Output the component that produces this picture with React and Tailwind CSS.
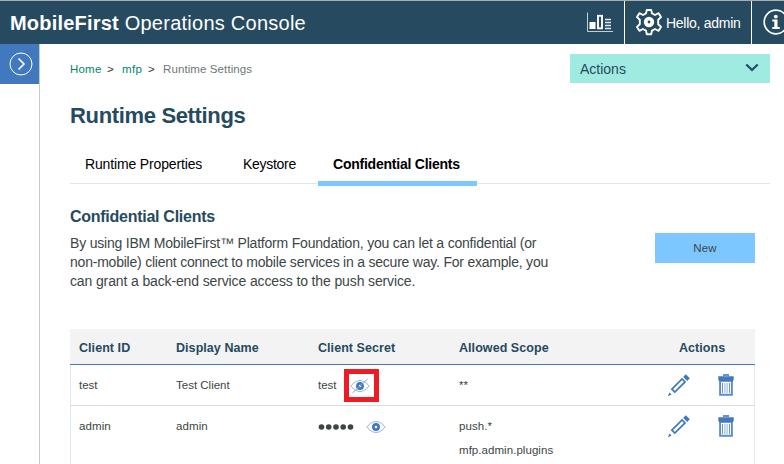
import React from "react";

function ChartIcon() {
  return (
    <svg width="28" height="22" viewBox="0 0 28 22" fill="none" stroke="#fff">
      <path d="M1.5 0.5V19.5H27" stroke="#c5d0d6" />
      <rect x="3.5" y="10" width="6" height="7" fill="#fff" stroke="none" />
      <rect x="12" y="3.8" width="4" height="12.5" strokeWidth="1.9" />
      <path d="M19 7.5h6M19 10.5h6M19 13.5h6M19 16.5h6" strokeWidth="1.5" stroke="#e3e8eb" />
    </svg>
  );
}

function GearIcon() {
  return (
    <svg width="27" height="28" viewBox="-13 -13 27 28" fill="none" stroke="#fff" strokeWidth="1.9" strokeLinejoin="round">
      <path d="M-2.2 -12H2.2L3 -8.6L6 -7L9.6 -8.8L12 -4.9L9.2 -2.2V2.2L12 4.9L9.6 8.8L6 7L3 8.6L2.2 12.2H-2.2L-3 8.6L-6 7L-9.6 8.8L-12 4.9L-9.2 2.2V-2.2L-12 -4.9L-9.6 -8.8L-6 -7L-3 -8.6Z" />
      <circle r="3.3" strokeWidth="3.8" />
    </svg>
  );
}

function InfoIcon() {
  return (
    <svg className="shrink-0" width="26" height="26" viewBox="0 0 26 26" fill="none">
      <circle cx="13" cy="13" r="11.8" stroke="#fff" strokeWidth="1.7" />
      <circle cx="12.8" cy="7.6" r="1.9" fill="#fff" />
      <path d="M9.3 10.6h5.2v7.4h2.2v1.9H9.3V18h2v-5.5h-2z" fill="#fff" />
    </svg>
  );
}

function EyeIcon({ crossed }) {
  return (
    <svg width="20" height="16" viewBox="0 0 20 16" fill="none">
      <path d="M0.8 8C4 4.2 6.8 2.6 10 2.6S16 4.2 19.2 8C16 11.8 13.2 13.4 10 13.4S4 11.8 0.8 8Z" stroke="#8fb0dc" />
      <circle cx="10" cy="8" r="2.6" stroke="#4178be" strokeWidth="2.7" />
      {crossed && <path d="M2.5 15L17.5 1" stroke="#7ba2d6" />}
    </svg>
  );
}

function PencilIcon() {
  return (
    <svg width="24" height="24" viewBox="0 0 24 24" fill="none">
      <path d="M4.9 16.2L15.1 6L18 8.9L7.8 19.1Z" stroke="#4178be" strokeWidth="1.7" />
      <path d="M16.2 4L18.8 1.2L22.8 5.2L20.2 8Z" fill="#4178be" />
      <path d="M0.8 23.2L2.4 19.4L4.6 21.6Z" fill="#4178be" />
    </svg>
  );
}

function TrashIcon() {
  return (
    <svg width="16" height="22" viewBox="0 0 16 22" fill="none">
      <rect x="5" y="0.2" width="6" height="1.6" fill="#4178be" />
      <path d="M0.3 2.2h15.4v3.4l-1 2.1H1.3l-1-2.1z" fill="#4178be" />
      <path d="M2.1 7v13.8h11.8V7" stroke="#5b8bcb" strokeWidth="1.9" />
      <path d="M4.5 9v10M11.5 9v10" stroke="#6a95cf" />
      <path d="M6.9 9v10M9.1 9v10" stroke="#a9c2e4" strokeWidth="1.3" />
    </svg>
  );
}

function Header() {
  return (
    <header className="flex h-11 shrink-0 border-t border-[#a9abac] bg-[#264a60] text-white">
      <h1 className="flex-1 pl-[10px] pt-px text-[20px] leading-[43px] whitespace-nowrap">
        <span className="font-bold tracking-[0.2px]">MobileFirst</span>
        <span className="tracking-[0.25px]"> Operations Console</span>
      </h1>
      <div className="flex w-[38px] pt-[11px]">
        <ChartIcon />
      </div>
      <div className="flex w-[127px] items-center border-l border-white pl-[11px]">
        <GearIcon />
        <span className="pl-[3px] pt-px text-[14px] tracking-[-0.27px] whitespace-nowrap">Hello, admin</span>
      </div>
      <div className="flex w-[33px] items-center overflow-hidden border-l border-white pb-px pl-[11px]">
        <InfoIcon />
      </div>
    </header>
  );
}

function Breadcrumb() {
  return (
    <nav className="flex pt-[5px] text-[11.5px] leading-[20px] whitespace-nowrap">
      <a className="w-[37px] tracking-[0.2px] text-[#008571]">Home</a>
      <span className="w-[15px] text-[#333]">&gt;</span>
      <a className="w-[26px] tracking-[0.4px] text-[#008571]">mfp</a>
      <span className="w-[15px] text-[#333]">&gt;</span>
      <span className="tracking-[0.1px] text-[#6d7777]">Runtime Settings</span>
    </nav>
  );
}

function Tabs() {
  return (
    <div className="flex h-[39px] text-[14px] leading-[34px] whitespace-nowrap text-black">
      <div className="mb-[2px] w-[158px] border-b border-[#dfe9e9] pl-[15px] tracking-[-0.15px]">Runtime Properties</div>
      <div className="mb-[2px] w-[90px] border-b border-[#dfe9e9] pl-[15px] tracking-[-0.28px]">Keystore</div>
      <div className="w-[159px] border-b-[5px] border-[#7cc7ff] pl-[15px] font-bold tracking-[-0.23px]">Confidential Clients</div>
      <div className="mb-[2px] flex-1 border-b border-[#dfe9e9]" />
    </div>
  );
}

const grid = "grid grid-cols-[97px_142px_141px_208px_1fr]";

function RowActions() {
  return (
    <div className="flex items-start pt-[8px]">
      <PencilIcon />
      <span className="ml-[27px] pt-[1px]">
        <TrashIcon />
      </span>
    </div>
  );
}

function ClientTable() {
  return (
    <div className="mr-[15px] text-[11.5px] text-[#3c4646]">
      <div className={grid + " h-9 border-b border-[#4178be] bg-[#f3f3f3] pl-[9px] text-[12.5px] leading-[38px] font-bold tracking-[0.06px] text-[#264a60]"}>
        <span>Client ID</span>
        <span>Display Name</span>
        <span>Client Secret</span>
        <span>Allowed Scope</span>
        <span className="pl-[12px]">Actions</span>
      </div>
      <div className={grid + " h-[41px] border-x border-b border-x-[#dfe9e9] border-b-[#d8dcdc] pl-[8px] leading-[40px]"}>
        <span>test</span>
        <span>Test Client</span>
        <span className="flex">
          <span className="w-[26px]">test</span>
          <span className="mt-[4px] flex h-[33px] w-[35px] items-center justify-center border-[5px] border-[#ed1c24] pr-[4px]">
            <EyeIcon crossed />
          </span>
        </span>
        <span>**</span>
        <RowActions />
      </div>
      <div className={grid + " h-[80px] border-x border-[#dfe9e9] pl-[8px] leading-[41px]"}>
        <span className="tracking-[0.1px]">admin</span>
        <span className="tracking-[0.1px]">admin</span>
        <span className="flex h-[41px] items-center">
          <svg width="37" height="8" viewBox="0 0 37 8" fill="#3c4646">
            <circle cx="3.5" cy="4" r="2.8" />
            <circle cx="10.7" cy="4" r="2.8" />
            <circle cx="18" cy="4" r="2.8" />
            <circle cx="25.2" cy="4" r="2.8" />
            <circle cx="32.5" cy="4" r="2.8" />
          </svg>
          <span className="ml-[11px]">
            <EyeIcon />
          </span>
        </span>
        <div className="pt-[8px] leading-[24px] tracking-[0.05px]">
          <div>push.*</div>
          <div>mfp.admin.plugins</div>
        </div>
        <RowActions />
      </div>
    </div>
  );
}

export default function App() {
  return (
    <div className="flex h-[464px] w-[784px] flex-col overflow-hidden bg-white font-['Liberation_Sans',Arial,sans-serif]">
      <Header />
      <div className="flex min-h-0 flex-1">
        <aside className="w-10 shrink-0 border-r border-[#c3cccc]">
          <button className="flex h-10 w-full items-center justify-center bg-[#4178be] pl-[2px]">
            <svg width="24" height="24" viewBox="0 0 24 24" fill="none" stroke="#fff">
              <circle cx="12" cy="12" r="11" />
              <path d="M9.5 6.5L15 12L9.5 17.5" strokeWidth="1.6" />
            </svg>
          </button>
        </aside>
        <main className="flex-1 pt-[10px] pr-[14px] pl-[30px]">
          <div className="flex h-[29px] justify-between">
            <Breadcrumb />
            <button className="flex h-[29px] w-[200px] items-center justify-between bg-[#a0ebe1] pt-px pr-[11px] pl-[10px] text-[14px] text-[#264a60]">
              Actions
              <svg className="mb-[3px]" width="14" height="9" viewBox="0 0 14 9" fill="none" stroke="#264a60" strokeWidth="2.2">
                <path d="M1.3 1.5L7 7L12.7 1.5" />
              </svg>
            </button>
          </div>
          <h2 className="mt-[18px] h-[30px] text-[22px] leading-[30px] font-bold tracking-[-0.34px] text-[#264a60]">Runtime Settings</h2>
          <div className="mt-[16px]">
            <Tabs />
          </div>
          <h3 className="mt-[20px] text-[16px] leading-[22px] font-bold tracking-[-0.27px] text-[#264a60]">Confidential Clients</h3>
          <div className="mt-[5px] flex h-[96px] justify-between pr-[15px]">
            <p className="pt-px text-[14px] leading-[19px] tracking-[-0.2px] whitespace-nowrap text-[#3c4646]">
              By using IBM MobileFirst™ Platform Foundation, you can let a confidential (or
              <br />
              <span className="tracking-[-0.22px]">
                non-mobile) client connect to mobile services in a secure way. For example, you
              </span>
              <br />
              <span className="tracking-[-0.13px]">can grant a back-end service access to the push service.</span>
            </p>
            <button className="h-[30px] w-[100px] bg-[#7cc7ff] pt-px text-[11.5px] tracking-[0.2px] text-[#3c4646]">New</button>
          </div>
          <ClientTable />
        </main>
      </div>
    </div>
  );
}
